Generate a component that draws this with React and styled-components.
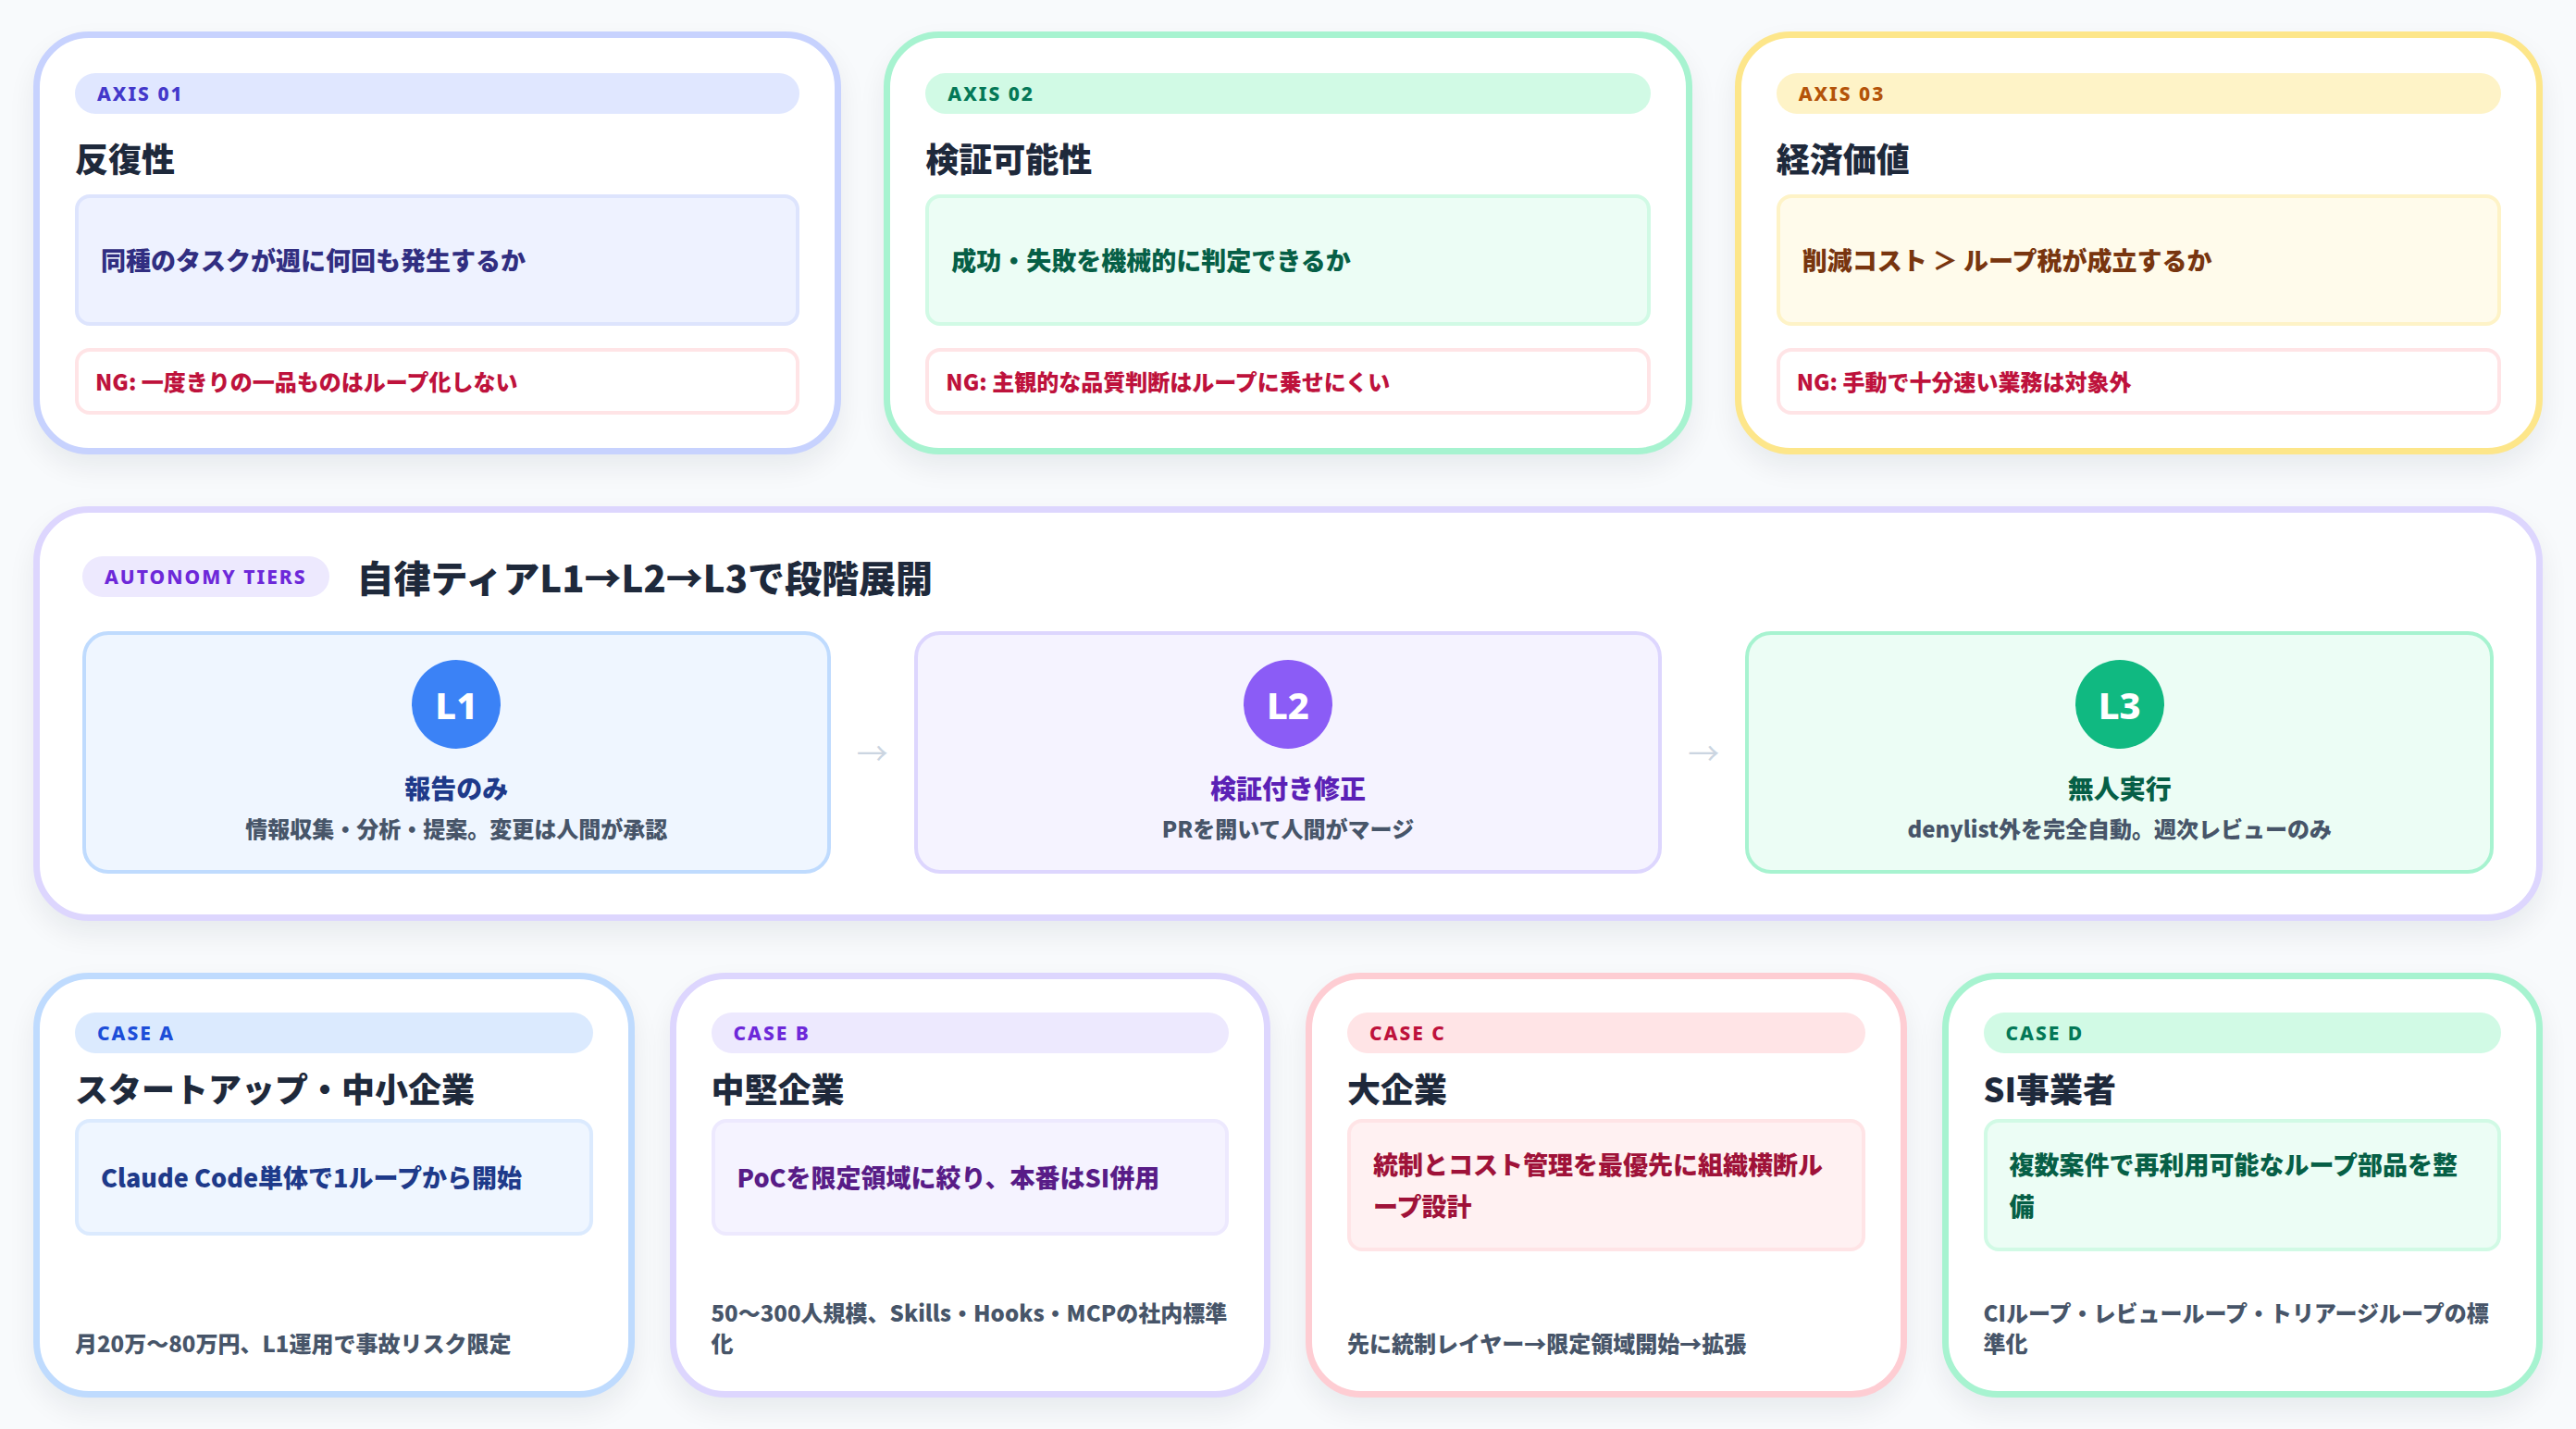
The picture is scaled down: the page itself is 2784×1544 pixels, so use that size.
import React from "react";
import styled, { createGlobalStyle } from "styled-components";

const Global = createGlobalStyle`
  html, body { margin: 0; background: #f8fafc; }
  body { font-family: "Noto Sans CJK JP", "Noto Sans", sans-serif; color: #1e293b; }
`;

const themes = {
  indigo: { border: "#c7d2fe", pill: "#e0e7ff", pillText: "#4338ca", box: "#eef2ff", boxBorder: "#dde4fd", boxText: "#312e81" },
  emerald: { border: "#a7f3d0", pill: "#d1fae5", pillText: "#047857", box: "#ecfdf5", boxBorder: "#d1fae5", boxText: "#065f46" },
  amber: { border: "#fde68a", pill: "#fef3c7", pillText: "#b45309", box: "#fffbeb", boxBorder: "#fef3c7", boxText: "#78350f" },
  blue: { border: "#bfdbfe", pill: "#dbeafe", pillText: "#1d4ed8", box: "#eff6ff", boxBorder: "#dbeafe", boxText: "#1e3a8a" },
  violet: { border: "#ddd6fe", pill: "#ede9fe", pillText: "#6d28d9", box: "#f5f3ff", boxBorder: "#ede9fe", boxText: "#581c87" },
  rose: { border: "#fecdd3", pill: "#ffe4e6", pillText: "#be123c", box: "#fff1f2", boxBorder: "#ffe4e6", boxText: "#9f1239" },
};

const Page = styled.div`
  box-sizing: border-box;
  width: 2784px;
  height: 1544px;
  padding: 34px 36px;
  display: flex;
  flex-direction: column;
  gap: 56px;
`;

const Row = styled.div`
  display: grid;
  grid-template-columns: repeat(${(p) => p.$cols}, 1fr);
  gap: ${(p) => p.$gap}px;
`;

const Card = styled.div`
  box-sizing: border-box;
  background: #fff;
  border: 7px solid ${(p) => themes[p.$t].border};
  border-radius: 60px;
  box-shadow: 0 14px 30px rgba(15, 23, 42, 0.07);
  padding: ${(p) => p.$pad};
  display: flex;
  flex-direction: column;
`;

const Pill = styled.div`
  background: ${(p) => themes[p.$t].pill};
  color: ${(p) => themes[p.$t].pillText};
  border-radius: 22px;
  height: 44px;
  padding: 0 24px;
  display: flex;
  align-items: center;
  font-family: "Noto Sans", sans-serif;
  font-weight: 800;
  font-size: 21px;
  letter-spacing: 2px;
`;

const Title = styled.h3`
  margin: ${(p) => p.$m};
  font-size: 36px;
  font-weight: 900;
  color: #1e293b;
  line-height: 1.3;
`;

const Box = styled.div`
  box-sizing: border-box;
  background: ${(p) => themes[p.$t].box};
  border: 4px solid ${(p) => themes[p.$t].boxBorder};
  border-radius: 16px;
  min-height: ${(p) => p.$h}px;
  padding: 22px 24px;
  display: flex;
  align-items: center;
  font-size: 27px;
  font-weight: 800;
  line-height: 1.7;
  color: ${(p) => themes[p.$t].boxText};
`;

const Ng = styled.div`
  box-sizing: border-box;
  margin-top: 24px;
  border: 4px solid #ffe4e6;
  border-radius: 16px;
  height: 72px;
  padding: 0 18px;
  display: flex;
  align-items: center;
  font-size: 24px;
  font-weight: 800;
  color: #be123c;
`;

const Footer = styled.div`
  margin-top: auto;
  font-size: 24px;
  font-weight: 800;
  color: #475569;
  line-height: 1.35;
`;

const TierHead = styled.div`
  display: flex;
  align-items: center;
  gap: 30px;
`;

const HeadTitle = styled.h2`
  margin: 0;
  font-size: 40px;
  font-weight: 900;
  color: #1e293b;
`;

const TierRow = styled.div`
  margin-top: 30px;
  display: flex;
  align-items: center;
  gap: 24px;
`;

const Tier = styled.div`
  box-sizing: border-box;
  flex: 1;
  height: 262px;
  background: ${(p) => themes[p.$t].box};
  border: 4px solid ${(p) => themes[p.$t].border};
  border-radius: 28px;
  display: flex;
  flex-direction: column;
  align-items: center;
  justify-content: center;
`;

const Circle = styled.div`
  width: 96px;
  height: 96px;
  border-radius: 50%;
  background: ${(p) => p.$c};
  color: #fff;
  display: flex;
  align-items: center;
  justify-content: center;
  font-family: "Noto Sans", sans-serif;
  font-size: 40px;
  font-weight: 800;
`;

const TierLabel = styled.div`
  margin-top: 22px;
  font-size: 28px;
  font-weight: 900;
  color: ${(p) => p.$c};
`;

const TierDesc = styled.div`
  margin-top: 6px;
  font-size: 24px;
  font-weight: 800;
  color: #475569;
`;

const Arrow = styled.div`
  color: #cbd5e1;
  font-size: 34px;
  width: 42px;
  text-align: center;
`;

const axes = [
  { t: "indigo", tag: "AXIS 01", title: "反復性", body: "同種のタスクが週に何回も発生するか", ng: "NG: 一度きりの一品ものはループ化しない" },
  { t: "emerald", tag: "AXIS 02", title: "検証可能性", body: "成功・失敗を機械的に判定できるか", ng: "NG: 主観的な品質判断はループに乗せにくい" },
  { t: "amber", tag: "AXIS 03", title: "経済価値", body: "削減コスト ＞ ループ税が成立するか", ng: "NG: 手動で十分速い業務は対象外" },
];

const tiers = [
  { t: "blue", n: "L1", c: "#3b82f6", lc: "#1e3a8a", label: "報告のみ", desc: "情報収集・分析・提案。変更は人間が承認" },
  { t: "violet", n: "L2", c: "#8b5cf6", lc: "#5b21b6", label: "検証付き修正", desc: "PRを開いて人間がマージ" },
  { t: "emerald", n: "L3", c: "#10b981", lc: "#065f46", label: "無人実行", desc: "denylist外を完全自動。週次レビューのみ" },
];

const cases = [
  { t: "blue", tag: "CASE A", title: "スタートアップ・中小企業", body: "Claude Code単体で1ループから開始", foot: "月20万〜80万円、L1運用で事故リスク限定" },
  { t: "violet", tag: "CASE B", title: "中堅企業", body: "PoCを限定領域に絞り、本番はSI併用", foot: "50〜300人規模、Skills・Hooks・MCPの社内標準化" },
  { t: "rose", tag: "CASE C", title: "大企業", body: "統制とコスト管理を最優先に組織横断ループ設計", foot: "先に統制レイヤー→限定領域開始→拡張" },
  { t: "emerald", tag: "CASE D", title: "SI事業者", body: "複数案件で再利用可能なループ部品を整備", foot: "CIループ・レビューループ・トリアージループの標準化" },
];

export default function App() {
  return (
    <>
      <Global />
      <Page>
        <Row $cols={3} $gap={46}>
          {axes.map((a) => (
            <Card key={a.tag} $t={a.t} $pad="38px 38px 36px">
              <Pill $t={a.t}>{a.tag}</Pill>
              <Title $m="24px 0 16px">{a.title}</Title>
              <Box $t={a.t} $h={142}>{a.body}</Box>
              <Ng>{a.ng}</Ng>
            </Card>
          ))}
        </Row>
        <Card $t="violet" $pad="40px 46px 44px 46px">
          <TierHead>
            <Pill $t="violet">AUTONOMY TIERS</Pill>
            <HeadTitle>自律ティアL1→L2→L3で段階展開</HeadTitle>
          </TierHead>
          <TierRow>
            {tiers.map((x, i) => (
              <React.Fragment key={x.n}>
                {i > 0 && <Arrow>→</Arrow>}
                <Tier $t={x.t}>
                  <Circle $c={x.c}>{x.n}</Circle>
                  <TierLabel $c={x.lc}>{x.label}</TierLabel>
                  <TierDesc>{x.desc}</TierDesc>
                </Tier>
              </React.Fragment>
            ))}
          </TierRow>
        </Card>
        <Row $cols={4} $gap={38} style={{ flex: 1 }}>
          {cases.map((c) => (
            <Card key={c.tag} $t={c.t} $pad="36px 38px 36px">
              <Pill $t={c.t}>{c.tag}</Pill>
              <Title $m="14px 0 10px">{c.title}</Title>
              <Box $t={c.t} $h={126}>{c.body}</Box>
              <Footer>{c.foot}</Footer>
            </Card>
          ))}
        </Row>
      </Page>
    </>
  );
}
